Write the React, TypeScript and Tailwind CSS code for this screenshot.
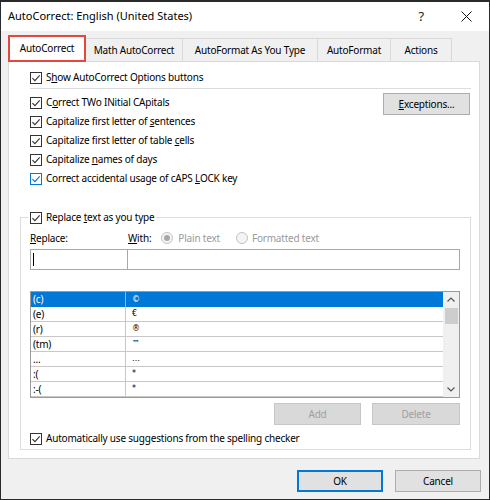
import React from "react";

function Check({ blue = false }: { blue?: boolean }) {
  return (
    <span
      className={
        blue
          ? "w-[12px] h-[12px] shrink-0 border border-[#0078d7] bg-white flex items-center justify-center"
          : "w-[12px] h-[12px] shrink-0 border border-[#333333] bg-white flex items-center justify-center"
      }
    >
      <svg width="10" height="10" viewBox="0 0 10 10">
        <path d="M1.4 5.1 L3.9 7.6 L8.7 2.4" fill="none" stroke={blue ? "#0078d7" : "#333333"} strokeWidth="1.1" />
      </svg>
    </span>
  );
}

function CheckRow({ children, blue = false }: { children: React.ReactNode; blue?: boolean }) {
  return (
    <div className="flex items-center gap-[4px] h-[19px]">
      <Check blue={blue} />
      <span className="whitespace-nowrap">{children}</span>
    </div>
  );
}

function Radio({ on }: { on: boolean }) {
  return (
    <span className="w-[12px] h-[12px] rounded-full border border-[#c4c4c4] bg-[#f4f4f4] flex items-center justify-center shrink-0">
      {on && <span className="w-[6px] h-[6px] rounded-full bg-[#a8a8a8]" />}
    </span>
  );
}

const rows: [string, string][] = [
  ["(c)", "©\uFE0E"],
  ["(e)", "€"],
  ["(r)", "®\uFE0E"],
  ["(tm)", "™\uFE0E"],
  ["...", "…"],
  [":(", "*"],
  [":-(", "*"],
];

export default function App() {
  return (
    <div className="w-[490px] h-[500px] bg-[#f0f0f0] border border-[#2a2a2a] border-t-2 flex flex-col font-['Noto_Sans',sans-serif] text-[10px] text-black tracking-[-0.2px] overflow-hidden">
      {/* Title bar */}
      <div className="h-[29px] bg-white flex items-center pl-[7px] shrink-0">
        <span className="text-[11px] tracking-normal">AutoCorrect: English (United States)</span>
        <span className="ml-auto text-[13px] mr-[37px] text-[#222]">?</span>
        <svg width="11" height="11" viewBox="0 0 11 11" className="mr-[17px]">
          <path d="M0.5 0.5 L10.5 10.5 M10.5 0.5 L0.5 10.5" stroke="#111" strokeWidth="1" />
        </svg>
      </div>

      {/* Tabs */}
      <div className="h-[30px] flex items-end pl-[7px] shrink-0 relative z-10">
        <div className="w-[78px] h-[27px] -mb-px bg-white border-2 border-[#e5473d] flex items-center justify-center">
          AutoCorrect
        </div>
        <div className="w-[97px] h-[23px] border border-l-0 border-b-0 border-[#d9d9d9] flex items-center justify-center">
          Math AutoCorrect
        </div>
        <div className="w-[135px] h-[23px] border border-l-0 border-b-0 border-[#d9d9d9] flex items-center justify-center">
          AutoFormat As You Type
        </div>
        <div className="w-[73px] h-[23px] border border-l-0 border-b-0 border-[#d9d9d9] flex items-center justify-center">
          AutoFormat
        </div>
        <div className="w-[61px] h-[23px] border border-l-0 border-b-0 border-[#d9d9d9] flex items-center justify-center">
          Actions
        </div>
      </div>

      {/* Pane */}
      <div className="ml-[7px] w-[472px] h-[398px] bg-white border border-[#d9d9d9] flex flex-col shrink-0">
        <div className="pl-[21px] pr-[8px] flex flex-col">
          <div className="mt-[6px]">
            <CheckRow>
              S<u>h</u>ow AutoCorrect Options buttons
            </CheckRow>
          </div>
          <div className="mt-px h-px bg-[#dcdcdc]" />
          <div className="mt-[4px] flex">
            <div className="flex flex-col">
              <CheckRow>
                C<u>o</u>rrect TWo INitial CApitals
              </CheckRow>
              <CheckRow>
                Capitalize first letter of <u>s</u>entences
              </CheckRow>
              <CheckRow>
                Capitalize first letter of table <u>c</u>ells
              </CheckRow>
              <CheckRow>
                Capitalize <u>n</u>ames of days
              </CheckRow>
              <CheckRow blue>
                Correct accidental usage of cAPS <u>L</u>OCK key
              </CheckRow>
            </div>
            <div className="ml-auto mr-px w-[87px] h-[22px] bg-[#e1e1e1] border border-[#adadad] flex items-center justify-center">
              <span>
                <u>E</u>xceptions...
              </span>
            </div>
          </div>
        </div>

        {/* Group box */}
        <div className="mt-[29px] ml-[11px] w-[451px] border border-[#dcdcdc] relative pt-[11px] pl-[9px] pr-[10px] pb-px flex flex-col">
          <div className="absolute -top-[10px] left-[7px] bg-white px-[2px]">
            <CheckRow>
              Replace <u>t</u>ext as you type
            </CheckRow>
          </div>
          <div className="h-[18px] flex items-center">
            <span className="w-[98px]">
              <u>R</u>eplace:
            </span>
            <span>
              <u>W</u>ith:
            </span>
            <span className="ml-[10px] flex items-center gap-[5px] text-[#9a9a9a]">
              <Radio on />
              Plain text
            </span>
            <span className="ml-[16px] flex items-center gap-[4px] text-[#9a9a9a]">
              <Radio on={false} />
              Formatted text
            </span>
          </div>
          <div className="mt-[2px] flex h-[21px]">
            <div className="w-[98px] h-full border border-[#a9a9a9] bg-white flex items-center pl-[2px]">
              <span className="w-px h-[13px] bg-black" />
            </div>
            <div className="-ml-px flex-1 h-full border border-[#a9a9a9] bg-white" />
          </div>

          {/* List */}
          <div className="mt-[21px] h-[107px] border border-[#9a9a9a] flex bg-white">
            <div className="flex-1 flex flex-col">
              {rows.map(([a, b], i) => (
                <div
                  key={i}
                  className={
                    i === 0
                      ? "h-[15px] flex bg-[#0078d7] text-white"
                      : "h-[15px] flex border-b border-[#c8c8c8]"
                  }
                >
                  <div
                    className={
                      i === 0
                        ? "w-[95px] h-full pl-[2px] flex items-center border-r border-[#8ab8e8]"
                        : "w-[95px] h-full pl-[2px] flex items-center border-r border-[#c8c8c8]"
                    }
                  >
                    {a}
                  </div>
                  <div className="pl-[6px] flex items-center font-['DejaVu_Sans',sans-serif] text-[8px]">{b}</div>
                </div>
              ))}
            </div>
            <div className="w-[16px] bg-[#f0f0f0] flex flex-col items-center">
              <svg width="16" height="16" viewBox="0 0 16 16">
                <path d="M4.5 9.5 L8 6 L11.5 9.5" fill="none" stroke="#555" strokeWidth="1.2" />
              </svg>
              <div className="w-[13px] h-[16px] bg-[#cdcdcd]" />
              <div className="flex-1" />
              <svg width="16" height="16" viewBox="0 0 16 16">
                <path d="M4.5 6.5 L8 10 L11.5 6.5" fill="none" stroke="#555" strokeWidth="1.2" />
              </svg>
            </div>
          </div>

          <div className="mt-[5px] flex justify-end gap-[11px]">
            <div className="w-[87px] h-[22px] bg-[#d9d9d9] border border-[#c6c6c6] text-[#a0a0a0] flex items-center justify-center">
              Add
            </div>
            <div className="w-[88px] h-[22px] bg-[#d9d9d9] border border-[#c6c6c6] text-[#a0a0a0] flex items-center justify-center">
              Delete
            </div>
          </div>
          <div className="mt-[4px]">
            <CheckRow>Automatically use suggestions from the spelling checker</CheckRow>
          </div>
        </div>
      </div>

      {/* Bottom buttons */}
      <div className="mt-[11px] flex justify-end gap-[12px] pr-[8px]">
        <div className="w-[86px] h-[22px] bg-[#e1e1e1] border-2 border-[#0078d7] flex items-center justify-center">
          OK
        </div>
        <div className="w-[86px] h-[22px] bg-[#e1e1e1] border border-[#adadad] flex items-center justify-center">
          Cancel
        </div>
      </div>
    </div>
  );
}
